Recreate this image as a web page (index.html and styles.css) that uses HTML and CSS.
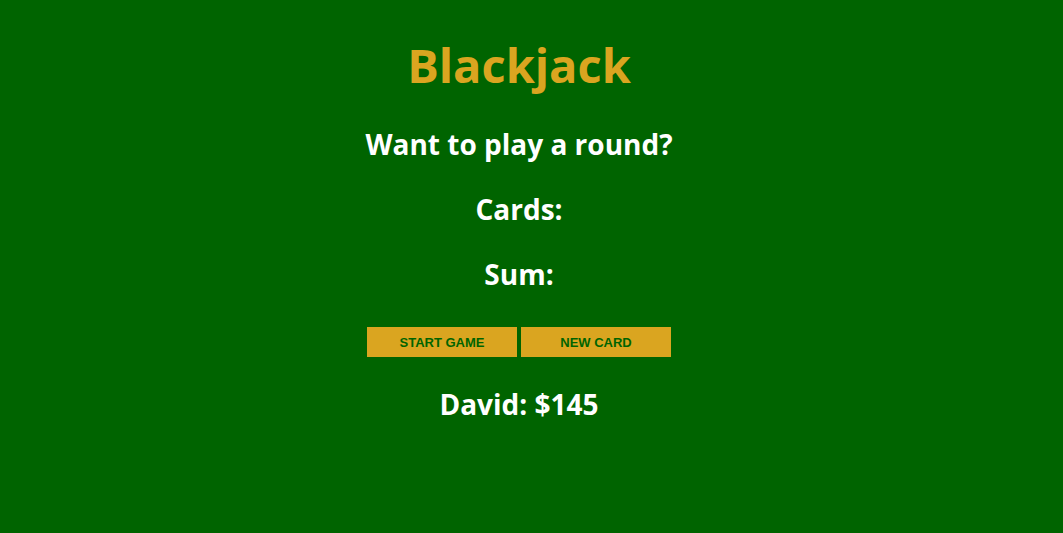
FILE: index.html
```html
<!DOCTYPE html>
<html>
<head>
<meta charset="utf-8">
<link rel="stylesheet" href="styles.css">
</head>
<body>
<main class="game">
  <h1 class="title">Blackjack</h1>
  <p class="line">Want to play a round?</p>
  <p class="line">Cards:</p>
  <p class="line">Sum:</p>
  <div class="buttons">
    <button class="btn">START GAME</button>
    <button class="btn">NEW CARD</button>
  </div>
  <p class="line">David: $145</p>
</main>
</body>
</html>
```
FILE: styles.css
```css
html, body {
  margin: 0;
  padding: 0;
  background: #006400;
  height: 100%;
}
body {
  font-family: "Open Sans", "DejaVu Sans", sans-serif;
  font-weight: bold;
  color: #ffffff;
}
.game {
  width: 1038px;
  display: flex;
  flex-direction: column;
  align-items: center;
  text-align: center;
  padding-top: 42px;
}
.title {
  color: #daa520;
  font-size: 47px;
  line-height: 1;
  margin: 0 0 41px 0;
}
.line {
  font-size: 28px;
  line-height: 1;
  margin: 0 0 37px 0;
}
.buttons {
  display: flex;
  gap: 4px;
  margin-top: 2px;
  margin-bottom: 33px;
}
.btn {
  width: 150px;
  height: 30px;
  border: none;
  background: #daa520;
  color: #006400;
  font-family: "Liberation Sans", Arial, sans-serif;
  font-weight: bold;
  font-size: 13px;
  padding: 0;
}
```
